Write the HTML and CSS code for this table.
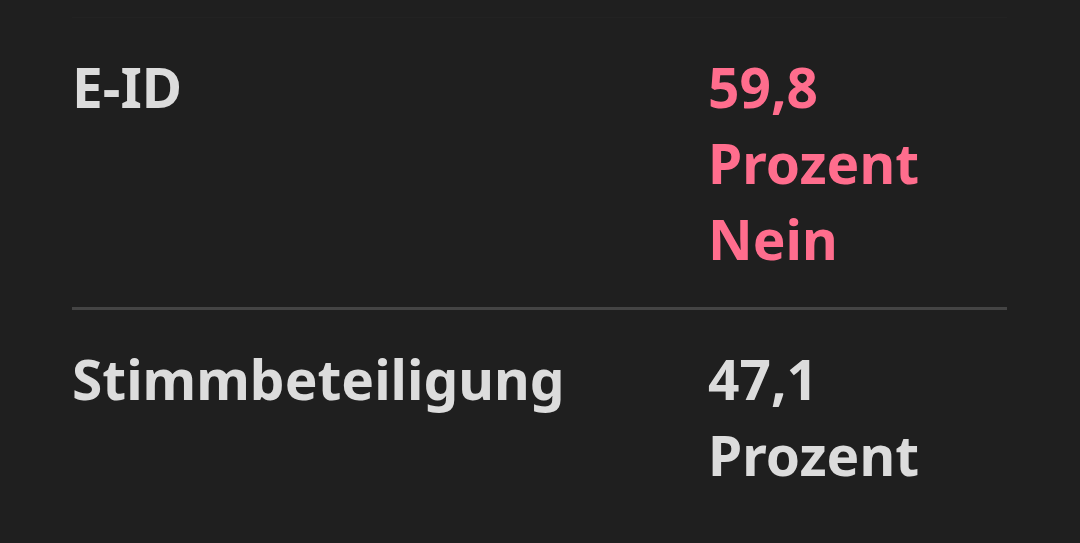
FILE: index.html
```html
<!DOCTYPE html>
<html lang="de">
<head>
<meta charset="utf-8">
<link rel="stylesheet" href="styles.css">
</head>
<body>
<div class="table">
  <div class="row">
    <div class="label">E-ID</div>
    <div class="value no">59,8<br>Prozent<br>Nein</div>
  </div>
  <div class="row">
    <div class="label">Stimmbeteiligung</div>
    <div class="value">47,1<br>Prozent</div>
  </div>
</div>
</body>
</html>
```

FILE: styles.css
```css
html, body {
  margin: 0;
  padding: 0;
  background: #1f1f1f;
}
body {
  font-family: "Noto Sans", "Liberation Sans", sans-serif;
  font-weight: 700;
  color: #dcdcdc;
}
.table {
  margin: 17px 0 0 72px;
  width: 935px;
  border-top: 1px solid #222222;
}
.row {
  display: grid;
  grid-template-columns: 636px 1fr;
  padding: 31px 0 30px;
  font-size: 55px;
  line-height: 76px;
}
.row + .row {
  border-top: 3px solid #444444;
  padding-top: 31px;
}
.no {
  color: #ff6d8d;
}
```
